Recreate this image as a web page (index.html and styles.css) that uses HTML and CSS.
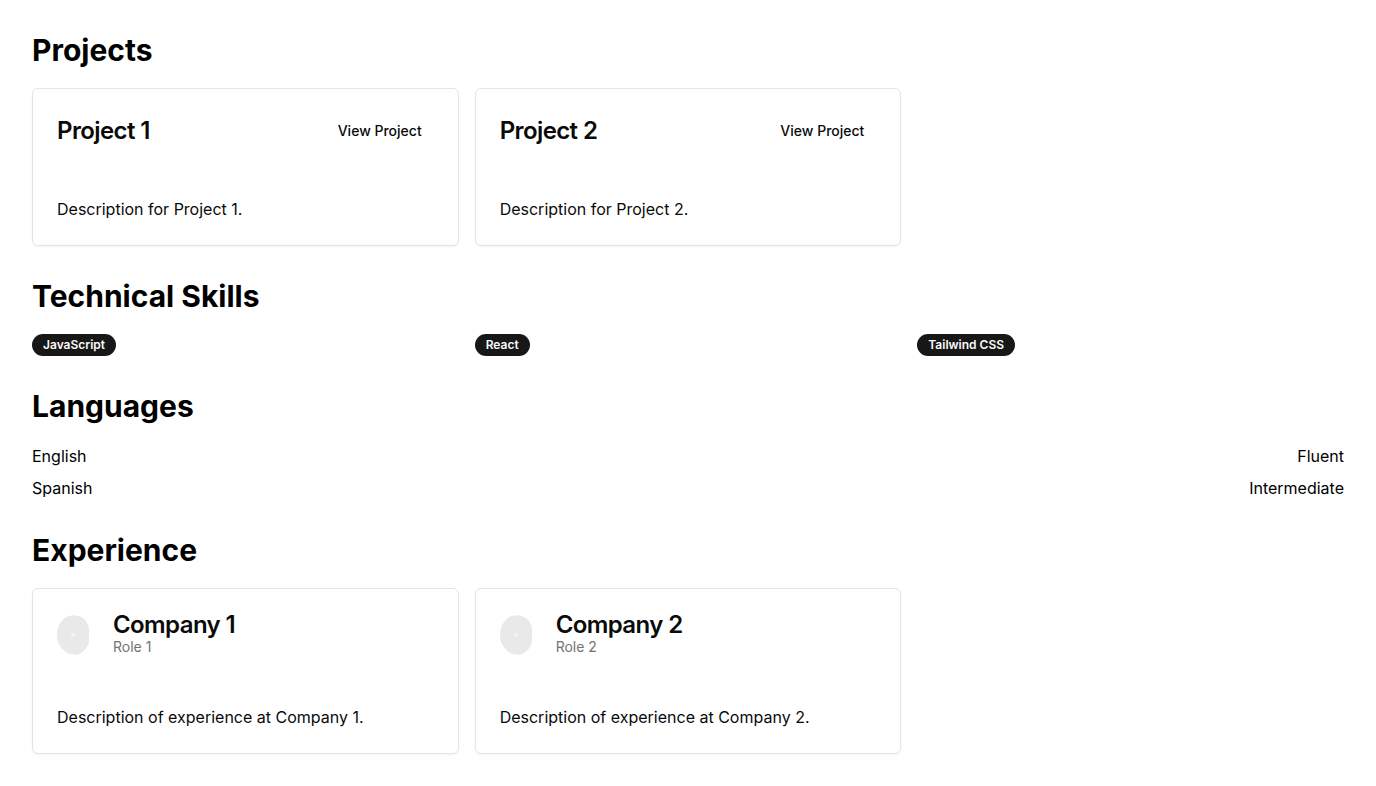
FILE: index.html
```html
<!DOCTYPE html>
<html lang="en">
<head>
<meta charset="utf-8">
<meta name="viewport" content="width=device-width, initial-scale=1">
<title>Portfolio</title>
<link rel="stylesheet" href="styles.css">
</head>
<body>
<main class="page">
  <section class="section">
    <h2 class="heading">Projects</h2>
    <div class="grid">
      <article class="card">
        <header class="card-header project-header">
          <h3 class="card-title">Project 1</h3>
          <button class="ghost-button" type="button">View Project</button>
        </header>
        <p class="card-body">Description for Project 1.</p>
      </article>
      <article class="card">
        <header class="card-header project-header">
          <h3 class="card-title">Project 2</h3>
          <button class="ghost-button" type="button">View Project</button>
        </header>
        <p class="card-body">Description for Project 2.</p>
      </article>
    </div>
  </section>
  <section class="section">
    <h2 class="heading">Technical Skills</h2>
    <div class="grid">
      <div class="skill"><span class="badge">JavaScript</span></div>
      <div class="skill"><span class="badge">React</span></div>
      <div class="skill"><span class="badge">Tailwind CSS</span></div>
    </div>
  </section>
  <section class="section">
    <h2 class="heading">Languages</h2>
    <ul class="languages">
      <li class="language"><span>English</span><span>Fluent</span></li>
      <li class="language"><span>Spanish</span><span>Intermediate</span></li>
    </ul>
  </section>
  <section class="section">
    <h2 class="heading">Experience</h2>
    <div class="grid">
      <article class="card">
        <header class="card-header company-header">
          <svg class="logo" viewBox="0 0 32 40" aria-hidden="true"><path class="logo-disc" d="M17 0.3C25 0.3 31 6 32 14V27C30 34 25 39.7 18 39.7C8 39.7 0 31 0 20C0 9 7 0.3 17 0.3Z"/><circle class="logo-glow" cx="16" cy="20" r="3"/><circle class="logo-dot" cx="16" cy="20" r="1.5"/></svg>
          <div>
            <h3 class="card-title">Company 1</h3>
            <p class="role">Role 1</p>
          </div>
        </header>
        <p class="card-body">Description of experience at Company 1.</p>
      </article>
      <article class="card">
        <header class="card-header company-header">
          <svg class="logo" viewBox="0 0 32 40" aria-hidden="true"><path class="logo-disc" d="M17 0.3C25 0.3 31 6 32 14V27C30 34 25 39.7 18 39.7C8 39.7 0 31 0 20C0 9 7 0.3 17 0.3Z"/><circle class="logo-glow" cx="16" cy="20" r="3"/><circle class="logo-dot" cx="16" cy="20" r="1.5"/></svg>
          <div>
            <h3 class="card-title">Company 2</h3>
            <p class="role">Role 2</p>
          </div>
        </header>
        <p class="card-body">Description of experience at Company 2.</p>
      </article>
    </div>
  </section>
</main>
</body>
</html>
```
FILE: styles.css
```css
* { box-sizing: border-box; }

body {
  margin: 0;
  background: #fff;
  color: #000;
  font-family: Inter, "Liberation Sans", sans-serif;
  font-size: 16px;
  line-height: 24px;
}

h2, h3, p, ul { margin: 0; padding: 0; }

.page {
  display: flex;
  flex-direction: column;
  gap: 32px;
  padding: 32px;
}

.section {
  display: flex;
  flex-direction: column;
  gap: 20px;
}

.heading {
  font-size: 30px;
  line-height: 36px;
  font-weight: 700;
}

.grid {
  display: grid;
  grid-template-columns: repeat(3, minmax(0, 1fr));
  gap: 16px;
}

.card {
  border: 1px solid #e5e5e5;
  border-radius: 6px;
  background: #fff;
  color: #0a0a0a;
  box-shadow: 0 1px 2px rgba(0, 0, 0, 0.05);
}

.card-header {
  display: flex;
  align-items: center;
  padding: 24px;
}

.project-header { justify-content: space-between; }

.card-title {
  font-size: 24px;
  line-height: 24px;
  font-weight: 600;
  letter-spacing: -0.025em;
}

.ghost-button {
  height: 36px;
  padding: 0 12px;
  border: 0;
  border-radius: 6px;
  background: transparent;
  color: inherit;
  font: 500 14px/20px Inter, "Liberation Sans", sans-serif;
}

.card-body { padding: 24px; }

.skill { display: flex; }

.badge {
  padding: 2px 10px;
  border: 1px solid transparent;
  border-radius: 11px;
  background: #171717;
  color: #fafafa;
  font-size: 12px;
  line-height: 16px;
  font-weight: 600;
}

.languages {
  display: grid;
  gap: 8px;
  list-style: none;
}

.language {
  display: flex;
  justify-content: space-between;
}

.company-header { gap: 24px; }

.logo {
  width: 32px;
  height: 40px;
}

.logo-disc { fill: #e9e9e9; }
.logo-glow { fill: #ececec; }
.logo-dot { fill: #f5f5f5; }

.role {
  color: #737373;
  font-size: 14px;
  line-height: 20px;
}
```
